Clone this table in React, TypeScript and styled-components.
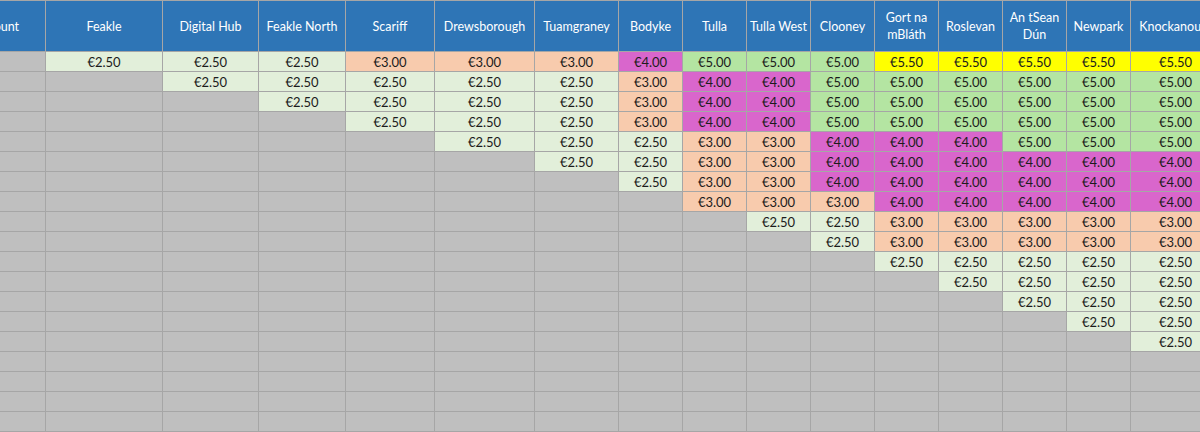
import { Fragment } from "react"
import styled, { createGlobalStyle } from "styled-components"

const GlobalStyle = createGlobalStyle`
    html, body {
        margin: 0;
        padding: 0;
        background: #bfbfbf;
    }
    body {
        font-family: 'Lato', 'Liberation Sans', sans-serif;
    }
`

const fills: Record<string, string> = {
    lg: '#e2efda',
    pe: '#f8cbad',
    ma: '#d966cc',
    gr: '#b4e5a2',
    ye: '#ffff00',
}

const valueFill: Record<string, string> = {
    '2.50': 'lg',
    '3.00': 'pe',
    '4.00': 'ma',
    '5.00': 'gr',
    '5.50': 'ye',
}

const stops = [
    'Feakle', 'Digital Hub', 'Feakle North', 'Scariff', 'Drewsborough', 'Tuamgraney',
    'Bodyke', 'Tulla', 'Tulla West', 'Clooney', 'Gort na mBláth', 'Roslevan',
    'An tSean Dún', 'Newpark', 'Knockanoura',
]

const widths = [97, 117, 96, 87, 89, 100, 84, 64, 64, 64, 64, 64, 64, 64, 64, 90]

// fares by row, starting on the diagonal
const fares: string[][] = [
    ['2.50', '2.50', '2.50', '3.00', '3.00', '3.00', '4.00', '5.00', '5.00', '5.00', '5.50', '5.50', '5.50', '5.50', '5.50'],
    ['2.50', '2.50', '2.50', '2.50', '2.50', '3.00', '4.00', '4.00', '5.00', '5.00', '5.00', '5.00', '5.00', '5.00'],
    ['2.50', '2.50', '2.50', '2.50', '3.00', '4.00', '4.00', '5.00', '5.00', '5.00', '5.00', '5.00', '5.00'],
    ['2.50', '2.50', '2.50', '3.00', '4.00', '4.00', '5.00', '5.00', '5.00', '5.00', '5.00', '5.00'],
    ['2.50', '2.50', '2.50', '3.00', '3.00', '4.00', '4.00', '4.00', '5.00', '5.00', '5.00'],
    ['2.50', '2.50', '3.00', '3.00', '4.00', '4.00', '4.00', '4.00', '4.00', '4.00'],
    ['2.50', '3.00', '3.00', '4.00', '4.00', '4.00', '4.00', '4.00', '4.00'],
    ['3.00', '3.00', '3.00', '4.00', '4.00', '4.00', '4.00', '4.00'],
    ['2.50', '2.50', '3.00', '3.00', '3.00', '3.00', '3.00'],
    ['2.50', '3.00', '3.00', '3.00', '3.00', '3.00'],
    ['2.50', '2.50', '2.50', '2.50', '2.50'],
    ['2.50', '2.50', '2.50', '2.50'],
    ['2.50', '2.50', '2.50'],
    ['2.50', '2.50'],
    ['2.50'],
]

const Viewport = styled.div`
    width: 1200px;
    height: 432px;
    overflow: hidden;
    background: #bfbfbf;
`

const Sheet = styled.div`
    display: grid;
    grid-template-columns: ${widths.map(w => w + 'px').join(' ')};
    grid-template-rows: 51px;
    grid-auto-rows: 20px;
    margin-left: -51px;
    width: max-content;
    border-top: 1px solid #a6a6a6;
`

const HeadCell = styled.div`
    box-sizing: border-box;
    background: #2e75b6;
    color: #ffffff;
    font-size: 12.5px;
    line-height: 17px;
    display: flex;
    align-items: center;
    justify-content: center;
    text-align: center;
    white-space: pre-line;
    border-right: 1px solid #a6a6a6;
    border-bottom: 1px solid #a6a6a6;
    overflow: hidden;
`

const Cell = styled.div<{ $fill?: string }>`
    box-sizing: border-box;
    background: ${p => (p.$fill ? fills[p.$fill] : '#bfbfbf')};
    color: #1c1c1c;
    font-size: 13px;
    display: flex;
    align-items: center;
    justify-content: center;
    border-right: 1px solid #a6a6a6;
    border-bottom: 1px solid #a6a6a6;
`

const headLabel = (name: string) => {
    if (name === 'Gort na mBláth') return 'Gort na\nmBláth'
    if (name === 'An tSean Dún') return 'An tSean\nDún'
    return name
}

const FareTable = () => {
    const rows = Array.from({ length: 20 }, (_, r) => r)
    return (
        <Viewport>
            <Sheet>
                <HeadCell>Amount</HeadCell>
                {stops.map(s => (
                    <HeadCell key={s}>{headLabel(s)}</HeadCell>
                ))}
                {rows.map(r => (
                    <Fragment key={r}>
                        <Cell />
                        {stops.map((s, c) => {
                            const v = r < fares.length && c >= r ? fares[r][c - r] : undefined
                            return v ? (
                                <Cell key={s} $fill={valueFill[v]}>€{v}</Cell>
                            ) : (
                                <Cell key={s} />
                            )
                        })}
                    </Fragment>
                ))}
            </Sheet>
        </Viewport>
    )
}

export default function App() {
    return (
        <>
            <GlobalStyle />
            <FareTable />
        </>
    )
}
